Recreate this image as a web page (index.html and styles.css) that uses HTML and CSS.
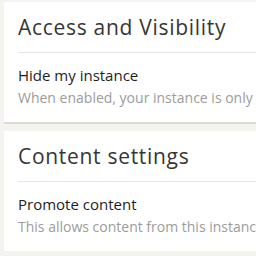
FILE: index.html
```html
<!DOCTYPE html>
<html>
<head>
<meta charset="utf-8">
<link rel="stylesheet" href="styles.css">
</head>
<body>
<div class="page">
  <section class="card">
    <div class="card-header">
      <h2 class="card-title">Access and Visibility</h2>
    </div>
    <div class="card-body">
      <div class="setting-label">Hide my instance</div>
      <div class="setting-desc">When enabled, your instance is only visible to you.</div>
    </div>
  </section>
  <section class="card">
    <div class="card-header">
      <h2 class="card-title">Content settings</h2>
    </div>
    <div class="card-body">
      <div class="setting-label">Promote content</div>
      <div class="setting-desc">This allows content from this instance to be promoted.</div>
    </div>
  </section>
</div>
</body>
</html>
```

FILE: styles.css
```css
html, body {
  margin: 0;
  padding: 0;
  background: #f4f3ef;
  overflow: hidden;
}
.page {
  display: flex;
  flex-direction: column;
  gap: 9px;
  padding: 2px 0 0 4px;
  width: 500px;
}
.card {
  background: #ffffff;
  box-shadow: 0 2px 0 #dcdbd7;
  padding: 0 14px;
  height: 120px;
  display: flex;
  flex-direction: column;
}
.card-header {
  height: 50px;
  border-bottom: 1px solid #e6e6e6;
  display: flex;
  align-items: flex-start;
}
.card-title {
  margin: 0;
  padding-top: 13px;
  font-family: "Open Sans", sans-serif;
  font-weight: 400;
  font-size: 21px;
  letter-spacing: 0.7px;
  line-height: 24px;
  color: #363636;
}
.card-body {
  padding-top: 12px;
}
.setting-label {
  font-family: "Open Sans", sans-serif;
  font-size: 15px;
  line-height: 20px;
  color: #1e1e1e;
}
.setting-desc {
  font-family: "Open Sans", sans-serif;
  font-size: 14px;
  line-height: 25px;
  color: #9c9c9c;
  white-space: nowrap;
}
```
